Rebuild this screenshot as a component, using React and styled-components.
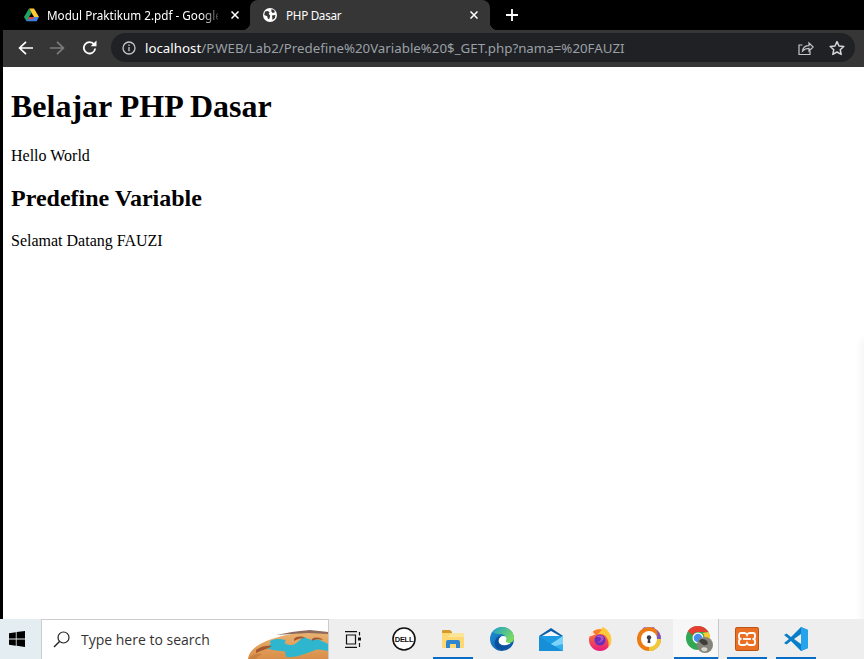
import React from 'react'
import styled, { createGlobalStyle } from 'styled-components'

const Global = createGlobalStyle`
html, body { margin: 0; padding: 0; background: #000; }
`;

const Screen = styled.div`
width: 864px;
height: 659px;
display: flex;
flex-direction: column;
overflow: hidden;
`;

const Window = styled.div`
flex: 1;
min-height: 0;
display: flex;
flex-direction: column;
padding-left: 3px;
background: #000;
`;

const TabStrip = styled.div`
height: 30px;
margin-left: -3px;
display: flex;
background: #000;
font-family: "Noto Sans", sans-serif;
font-size: 11.7px;
color: #fff;
`;

const Tab = styled.div`
position: relative;
width: ${(p) => p.$w}px;
display: flex;
align-items: center;
padding-left: ${(p) => p.$pad}px;
box-sizing: border-box;
border-radius: 8px 8px 0 0;
background: ${(p) => (p.$active ? '#363636' : 'transparent')};

${(p) => p.$active && `
&::before, &::after {
  content: "";
  position: absolute;
  bottom: 0;
  width: 8px;
  height: 8px;
}
&::before { left: -8px; background: radial-gradient(circle at 0 0, transparent 8px, #363636 8.5px); }
&::after { right: -8px; background: radial-gradient(circle at 100% 0, transparent 8px, #363636 8.5px); }
`}
`;

const TabTitle = styled.span`
margin-left: ${(p) => p.$gap}px;
width: ${(p) => p.$w}px;
white-space: nowrap;
letter-spacing: ${(p) => (p.$fade ? '0' : '-0.3px')};
${(p) => p.$fade && `
-webkit-mask-image: linear-gradient(to right, #000 90%, rgba(0,0,0,0.25) 100%);
mask-image: linear-gradient(to right, #000 90%, rgba(0,0,0,0.25) 100%);
`}
`;

const NewTab = styled.div`
margin-left: 16px;
display: flex;
align-items: center;
`;

const Toolbar = styled.div`
height: 37px;
display: flex;
align-items: flex-start;
background: #363636;
box-sizing: border-box;
padding-top: 3px;
`;

const NavGroup = styled.div`
width: 108px;
height: 29px;
display: flex;
align-items: center;
padding-left: 15px;
gap: 17px;
box-sizing: border-box;
`;

const UrlBar = styled.div`
width: 744px;
height: 29px;
border-radius: 15px;
background: #202124;
display: flex;
align-items: center;
padding-left: 11px;
padding-right: 10px;
box-sizing: border-box;
font-family: "Noto Sans", sans-serif;
font-size: 13.3px;
color: #9aa0a6;
`;

const UrlText = styled.span`
margin-left: 9px;
white-space: nowrap;
flex: 1;
`;

const Host = styled.span`
color: #fff;
`;

const UrlActions = styled.div`
display: flex;
align-items: center;
gap: 15px;
`;

const Page = styled.div`
position: relative;
flex: 1;
min-height: 0;
display: flow-root;
background: #fff;
padding: 0 8px;
color: #000;
font-family: "Liberation Serif", serif;
font-size: 16px;
overflow: hidden;

/* faint shadow of a window off screen */
&::after {
  content: "";
  position: absolute;
  right: -2px;
  bottom: -6px;
  width: 4px;
  height: 285px;
  background: rgba(0,0,0,0.07);
  filter: blur(3px);
}
`;

const Heading = styled.h1`
font-size: 32px;
line-height: 37px;
font-weight: bold;
margin: 21px 0 22px;
`;

const SubHeading = styled.h2`
font-size: 24px;
line-height: 27px;
font-weight: bold;
margin: 20px 0;
`;

const Text = styled.p`
font-size: 16px;
line-height: 18px;
margin: 16px 0;
`;

const Taskbar = styled.div`
height: 40px;
display: flex;
background: #eeeeee;
font-family: "Open Sans", sans-serif;
`;

const StartButton = styled.div`
width: 41px;
box-sizing: border-box;
padding-left: 9px;
display: flex;
align-items: center;
background: #e4edf1;
`;

const SearchBox = styled.div`
width: 288px;
height: 40px;
box-sizing: border-box;
display: flex;
align-items: center;
background: #fff;
border: 1px solid #cccccc;
border-bottom: 0;
padding-left: 11px;
overflow: hidden;
`;

const SearchLabel = styled.span`
margin-left: 11px;
font-size: 14px;
color: #333;
white-space: nowrap;
flex: 1;
`;

const SearchArt = styled.svg`
align-self: flex-end;
flex: none;
`;

const TaskButton = styled.div`
position: relative;
width: ${(p) => p.$w || 49}px;
height: 40px;
box-sizing: border-box;
padding-left: ${(p) => p.$pad || 0}px;
display: flex;
align-items: center;
justify-content: ${(p) => (p.$pad ? 'flex-start' : 'center')};
background: ${(p) => (p.$active ? '#f7f7f7' : 'transparent')};

${(p) => p.$open && `
&::after {
  content: "";
  position: absolute;
  bottom: 0;
  left: ${p.$active ? 1 : 5}px;
  right: ${p.$active ? 0 : 4}px;
  height: 2px;
  background: #0a6cc4;
}
`}
`;

const Divider = styled.div`
width: 1px;
height: 40px;
margin: 0 3px 0 0;
background: #c8c8c8;
`;

const Gap = styled.div`
width: ${(p) => p.$w}px;
`;

const BackIcon = () => (
  <svg width="15" height="14" viewBox="0 0 15 14" fill="none" stroke="#fff" strokeWidth="1.7">
    <path d="M15 7H2M8 .8 1.6 7 8 13.200" />
  </svg>
)

const ForwardIcon = () => (
  <svg width="15" height="14" viewBox="0 0 15 14" fill="none" stroke="#7a7c7e" strokeWidth="1.7">
    <path d="M0 7h13M7 .8 13.400 7 7 13.200" />
  </svg>
)

const ReloadIcon = () => (
  <svg width="15" height="15" viewBox="0 0 15 15" fill="none">
    <path d="M12.200 4.500A5.700 5.700 0 1 0 13.200 8.500" stroke="#fff" strokeWidth="1.8" />
    <path d="M14.500.5v5.800H8.700z" fill="#fff" />
  </svg>
)

const InfoIcon = () => (
  <svg width="14" height="14" viewBox="0 0 14 14" fill="none" stroke="#c4c7c9" strokeWidth="1.3">
    <circle cx="7" cy="7" r="6" />
    <path d="M7 6v4.200M7 3.600V5" />
  </svg>
)

const ShareIcon = () => (
  <svg width="16" height="16" viewBox="0 0 16 16" fill="none" stroke="#c4c7c9" strokeWidth="1.2">
    <path d="M4.500 5H1v9.500h11V11" />
    <path d="M4.500 11c.5-3.500 3-5.400 6.500-5.400V3l4.200 4-4.200 4V8.400c-2.600 0-4.800.8-6.500 2.600z" />
  </svg>
)

const StarIcon = () => (
  <svg width="16" height="16" viewBox="0 0 16 16" fill="none" stroke="#d5d7d9" strokeWidth="1.5" strokeLinejoin="round">
    <path d="M8 1.600 10 6l4.800.5-3.600 3.200 1 4.700L8 12l-4.200 2.400 1-4.700L1.200 6.500 6 6z" />
  </svg>
)

const DriveIcon = () => (
  <svg width="15" height="14" viewBox="0 0 15 14">
    <path d="M5 .5h5l5 8.500h-5z" fill="#ffc934" />
    <path d="M4.500 9H15l-2.400 4.300H2.400z" fill="#3f7fe8" />
    <path d="M5 .5 7.500 5 2.400 13.300 0 9z" fill="#1fa463" />
    <path d="M5 9h5.100l-1 2.200H3.800z" fill="#d8453a" />
  </svg>
)

const GlobeIcon = () => (
  <svg width="14" height="14" viewBox="0 0 14 14">
    <circle cx="7" cy="7" r="7" fill="#fff" />
    <path d="M2 3.400 5 3l1.600 1.400-1 1.600 1.600 1.400-.7 3-1.400.8-.9-3L1.200 7zM8.500 1.200l2.600.8.8 2.200-2.200.8-1.400-1.600zM9 7.400l3.400-.4-.5 3-2.400 2z" fill="#363636" />
  </svg>
)

const CloseIcon = () => (
  <svg width="8" height="8" viewBox="0 0 8 8" stroke="#fff" strokeWidth="1.5">
    <path d="M.5.5l7 7M7.500.5l-7 7" />
  </svg>
)

const PlusIcon = () => (
  <svg width="12" height="12" viewBox="0 0 12 12" stroke="#fff" strokeWidth="1.8">
    <path d="M6 0v12M0 6h12" />
  </svg>
)

const WindowsIcon = () => (
  <svg width="16" height="16" viewBox="0 0 16 16" fill="#000">
    <path d="M0 2.200 6.800 1.200v6.300H0zM7.600 1.100 16 0v7.500H7.600zM0 8.400h6.800v6.400L0 13.800zM7.600 8.400H16V16l-8.400-1.200z" />
  </svg>
)

const SearchIcon = () => (
  <svg width="17" height="17" viewBox="0 0 17 17" fill="none" stroke="#222" strokeWidth="1.2">
    <circle cx="10.500" cy="6.500" r="5.500" />
    <path d="M6.500 10.500 1 16" strokeWidth="1.5" />
  </svg>
)

const DonutArt = () => (
  <SearchArt width="80" height="29" viewBox="0 0 80 29">
    <defs>
      <linearGradient id="crust" x1="0" y1="0" x2="0" y2="1">
        <stop offset="0" stopColor="#e9b373" />
        <stop offset="1" stopColor="#d98f49" />
      </linearGradient>
    </defs>
    <path d="M0 29C1 16 22 7 50 3l10-2 20 1v27z" fill="url(#crust)" />
    <path d="M28 5 44 2l8-1 10-1 18 2v2L60 3z" fill="#8d6a5c" />
    <path d="M22 11c6-3 10-2 16-1-3 3 0 5 6 5 6-1 7-6 12-8 4 2 7 3 10 3 3-2 8 1 14 4v7c-6-1-10-3-15 0-8 3-18 7-26 6-3-2 0-6-4-6-6 0-12-1-17-3 2-3 6-2 4-7z" fill="#2fb6cf" />
    <path d="M8 20c5-4 11-5 16-4-4 3-10 4-16 7z" fill="#a4572e" />
    <path d="M46 9c3-3 8-3 11-1-4 0-8 1-11 3zM64 9c3-2 8-2 11 1-4-1-8-1-11 1z" fill="#a4572e" />
    <path d="M0 29c3-4 8-6 14-5-3 2-5 3-6 5z" fill="#c9813f" />
  </SearchArt>
)

const TaskViewIcon = () => (
  <svg width="17" height="17" viewBox="0 0 17 17" fill="none" stroke="#111" strokeWidth="1.2">
    <path d="M0 .6h12M0 16.400h12M1.500 4h9v9h-9zM14.500 1v3.500M14.500 12v4" />
    <rect x="13" y="6.500" width="3" height="3" fill="#111" stroke="none" />
  </svg>
)

const DellIcon = () => (
  <svg width="24" height="24" viewBox="0 0 24 24">
    <circle cx="12" cy="12" r="11" fill="#fff" stroke="#111" strokeWidth="1.6" />
    <text x="12" y="14.600" textAnchor="middle" fontFamily="Liberation Sans, sans-serif" fontWeight="bold" fontSize="7.500" letterSpacing="-.3" fill="#111">DELL</text>
  </svg>
)

const ExplorerIcon = () => (
  <svg width="22" height="18" viewBox="0 0 22 18">
    <path d="M0 1a1 1 0 0 1 1-1h7l2 2v2H0z" fill="#d69a2a" />
    <rect x="0" y="3" width="22" height="15" fill="#fdd873" />
    <path d="M10 3h12v4H6z" fill="#fbe59a" />
    <path d="M4 18v-6a2 2 0 0 1 2-2h10a2 2 0 0 1 2 2v6h-4v-4H8v4z" fill="#2f86cf" />
  </svg>
)

const EdgeIcon = () => (
  <svg width="24" height="24" viewBox="0 0 24 24">
    <defs>
      <linearGradient id="edgeBlue" x1="0" y1="0" x2="1" y2="1">
        <stop offset="0" stopColor="#1f93d8" />
        <stop offset="1" stopColor="#0c4f9e" />
      </linearGradient>
      <linearGradient id="edgeGreen" x1="0" y1="0" x2="1" y2=".6">
        <stop offset="0" stopColor="#1ea0c8" />
        <stop offset="1" stopColor="#7ddc5e" />
      </linearGradient>
    </defs>
    <circle cx="12" cy="12" r="12" fill="url(#edgeBlue)" />
    <path d="M3 5C6 1 10 0 12 0c7 0 12 5 12 11 0 3-2 5-6 5-2 0-3-1-2-3 1-3-2-6-6-6-3 0-5 0-7-2z" fill="url(#edgeGreen)" />
    <path d="M8.500 14c0-3 2.500-5 5-5s3.500 2 2.700 4c-.7 1.700.3 3 2.800 3 1 0 1.500 0 2-.5-1.500 2-6 3.500-9 2.500-2-.7-3.500-2-3.500-4z" fill="#fff" />
    <path d="M5 14c1-3 3-5 6-5-2 1.500-3 3.500-2.500 6 .5 2.500 3 3.700 6.500 3.700 2 0 4-.5 5-1.700-2 3.500-5 6-8.500 6-4 0-8-4-6.500-9z" fill="#0c4f9e" />
  </svg>
)

const MailIcon = () => (
  <svg width="24" height="23" viewBox="0 0 24 23">
    <path d="M12 0 24 8v3H0V8z" fill="#0a5ea8" />
    <path d="M3 8 12 3l9 5-9 6z" fill="#f4f8fb" />
    <rect x="0" y="8" width="24" height="15" fill="#1c9ce4" />
    <path d="M0 8l12 8 12-8v15H0z" fill="#33b1ef" />
    <path d="M0 23V8l12 8 12 7z" fill="#168ed8" />
    <path d="M12 16 24 8v8l-8 2z" fill="#7ed4f8" />
  </svg>
)

const FirefoxIcon = () => (
  <svg width="24" height="24" viewBox="0 0 24 24">
    <defs>
      <linearGradient id="foxBody" x1="0" y1="0" x2="0" y2="1">
        <stop offset="0" stopColor="#ff8a1e" />
        <stop offset="1" stopColor="#e8197f" />
      </linearGradient>
    </defs>
    <circle cx="12" cy="13" r="11" fill="url(#foxBody)" />
    <path d="M9 7c3-1 5-4 5-7 4 1 8 5 9 10 1 4 0 8-3 11 2-6-1-13-6-14-2 0-3 0-5 0z" fill="#ffc83a" />
    <path d="M1 9c1-2 2-3 4-5 0 2 1 3 3 3-3 1-5 3-7 2z" fill="#ffe6d8" />
    <circle cx="12" cy="13" r="5.500" fill="#6a2fb8" />
    <path d="M8 10c2-2 5-2 7-1 1 1 1 3 0 4-1 2-4 3-6 2 2 0 4-1 4-3s-3-2-5-2z" fill="#b14ec7" />
  </svg>
)

const AvastIcon = () => (
  <svg width="24" height="24" viewBox="0 0 24 24">
    <circle cx="12" cy="12" r="12" fill="#ee7a12" />
    <path d="M5 2.500A12 12 0 0 1 24 12h-5a7 7 0 0 0-14-9.500z" fill="#7a55c7" />
    <path d="M24 12a12 12 0 0 1-12 12v-4a8 8 0 0 0 7-8z" fill="#f0c93a" />
    <circle cx="12" cy="12" r="8" fill="#fff" />
    <circle cx="12" cy="10.500" r="2.200" fill="#3d3d4a" />
    <path d="M11.200 11h1.600l.7 5h-3z" fill="#3d3d4a" />
  </svg>
)

const ChromeIcon = () => (
  <svg width="27" height="27" viewBox="0 0 27 27">
    <circle cx="12" cy="12" r="12" fill="#31a853" />
    <path d="M12 0a12 12 0 0 1 10.400 6H12a6 6 0 0 0-5.500 3.400L2 5a12 12 0 0 1 10-5z" fill="#e53f31" />
    <path d="M22.400 6A12 12 0 0 1 12 24l5-8.500A6 6 0 0 0 16.500 7z" fill="#fcc934" />
    <circle cx="12" cy="12" r="5.500" fill="#fff" />
    <circle cx="12" cy="12" r="4.300" fill="#4a8df0" />
    <circle cx="19" cy="19" r="8" fill="#85837a" />
    <path d="M13 15c2-3 5-2 7-1 2 2 3 4 0 5-2 1-4 0-7-4z" fill="#3f3f3a" />
    <path d="M15 23c1-2 4-2 6-1 1 1 0 3-1 3-2 1-4 0-5-2z" fill="#d8d8d0" />
  </svg>
)

const XamppIcon = () => (
  <svg width="24" height="24" viewBox="0 0 24 24">
    <rect width="24" height="24" rx="2" fill="#ea6f22" />
    <rect x=".5" y=".5" width="23" height="23" rx="2" fill="none" stroke="#b95416" />
    <path d="M6 6h3.500c1.200 0 2 .8 2.500 2 .5-1.200 1.300-2 2.500-2H18c1.200 0 2 .8 2 2v2c0 1-1 2-2.500 2 1.500 0 2.500 1 2.500 2v2c0 1.200-.8 2-2 2h-3.500c-1.200 0-2-.8-2.500-2-.5 1.200-1.300 2-2.500 2H6c-1.200 0-2-.8-2-2v-2c0-1 1-2 2.500-2C5 12 4 11 4 10V8c0-1.200.8-2 2-2z" fill="none" stroke="#fff" strokeWidth="1.800" />
    <path d="M8 12h8" stroke="#fff" strokeWidth="1.800" />
  </svg>
)

const VscodeIcon = () => (
  <svg width="24" height="24" viewBox="0 0 24 24">
    <path d="M17 0 7 10 2.500 6.500 0 8l5 4-5 4 2.500 1.500L7 14l10 10 7-3V3z" fill="#0a7dc8" />
    <path d="M17 0v24l7-3V3z" fill="#25a3ec" />
    <path d="M17 7 10 12l7 5z" fill="#eeeeee" />
  </svg>
)

function App() {
  return (
    <Screen>
      <Global />
      <Window>
        <TabStrip>
          <Tab $w={250} $pad={24}>
            <DriveIcon />
            <TabTitle $gap={8} $w={171} $fade>Modul Praktikum 2.pdf - Google</TabTitle>
            <Gap $w={13} />
            <CloseIcon />
          </Tab>
          <Tab $w={240} $pad={13} $active>
            <GlobeIcon />
            <TabTitle $gap={9} $w={184}>PHP Dasar</TabTitle>
            <CloseIcon />
          </Tab>
          <NewTab><PlusIcon /></NewTab>
        </TabStrip>
        <Toolbar>
          <NavGroup>
            <BackIcon />
            <ForwardIcon />
            <ReloadIcon />
          </NavGroup>
          <UrlBar>
            <InfoIcon />
            <UrlText><Host>localhost</Host>/P.WEB/Lab2/Predefine%20Variable%20$_GET.php?nama=%20FAUZI</UrlText>
            <UrlActions>
              <ShareIcon />
              <StarIcon />
            </UrlActions>
          </UrlBar>
        </Toolbar>
        <Page>
          <Heading>Belajar PHP Dasar</Heading>
          <Text>Hello World</Text>
          <SubHeading>Predefine Variable</SubHeading>
          <Text>Selamat Datang FAUZI</Text>
        </Page>
      </Window>
      <Taskbar>
        <StartButton><WindowsIcon /></StartButton>
        <SearchBox>
          <SearchIcon />
          <SearchLabel>Type here to search</SearchLabel>
          <DonutArt />
        </SearchBox>
        <TaskButton $w={48}><TaskViewIcon /></TaskButton>
        <Gap $w={3} />
        <TaskButton $w={48}><DellIcon /></TaskButton>
        <TaskButton $open><ExplorerIcon /></TaskButton>
        <TaskButton><EdgeIcon /></TaskButton>
        <TaskButton><MailIcon /></TaskButton>
        <TaskButton><FirefoxIcon /></TaskButton>
        <TaskButton><AvastIcon /></TaskButton>
        <TaskButton $w={45} $pad={13} $open $active><ChromeIcon /></TaskButton>
        <Divider />
        <TaskButton $open><XamppIcon /></TaskButton>
        <TaskButton $open><VscodeIcon /></TaskButton>
      </Taskbar>
    </Screen>
  )
}

export default App
